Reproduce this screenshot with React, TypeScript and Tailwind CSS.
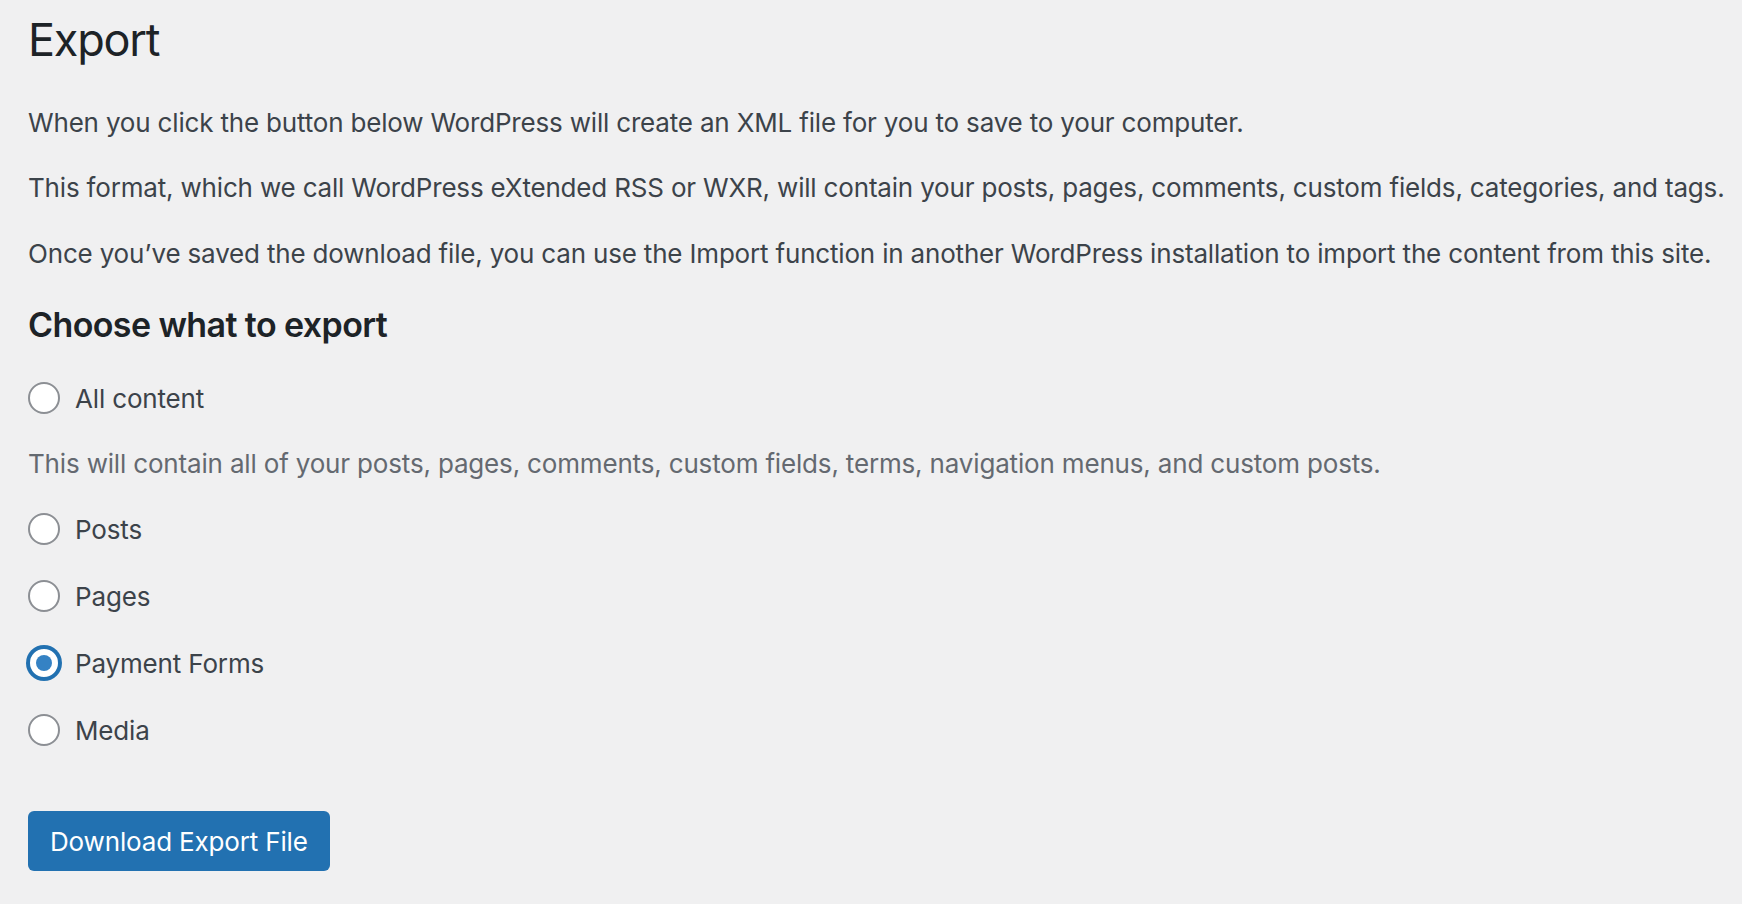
import React, { useState } from 'react';

const options = [
    { id: 'posts', label: 'Posts' },
    { id: 'pages', label: 'Pages' },
    { id: 'payment', label: 'Payment Forms' },
    { id: 'media', label: 'Media' },
];

// WordPress-style radio control
const Radio = ({ checked }: { checked: boolean }) => (
    <span
        className={`flex h-[32px] w-[32px] flex-shrink-0 items-center justify-center rounded-full bg-white ${
            checked ? 'border-[2px] border-[#2271b1] shadow-[0_0_0_2px_#2271b1]' : 'border-[2px] border-[#8c8f94]'
        }`}
    >
        {checked && <span className="h-[16px] w-[16px] rounded-full bg-[#3582c4]" />}
    </span>
);

const RadioRow = ({ label, checked, onSelect }: { label: string; checked: boolean; onSelect: () => void }) => (
    <label className="flex h-[40px] cursor-pointer items-center gap-[15px]" onClick={onSelect}>
        <Radio checked={checked} />
        <span className="text-[26px] tracking-[-0.16px] text-[#3c434a]">{label}</span>
    </label>
);

export default function App() {
    const [selected, setSelected] = useState('payment');

    return (
        <div className="min-h-screen bg-[#f0f0f1] pl-[28px] pt-[10px] font-['Inter',sans-serif] text-[#3c434a]">
            <h1 className="text-[45px] leading-[60px] font-normal tracking-[-1.2px] text-[#1d2327]">Export</h1>

            <div className="text-[26px] leading-[39px] tracking-[-0.18px]">
                <p className="mt-[33px]">
                    When you click the button below WordPress will create an XML file for you to save to your computer.
                </p>
                <p className="mt-[26px] whitespace-nowrap">
                    This format, which we call WordPress eXtended RSS or WXR, will contain your posts, pages, comments, custom fields, categories, and tags.
                </p>
                <p className="mt-[27px] whitespace-nowrap">
                    Once you’ve saved the download file, you can use the Import function in another WordPress installation to import the content from this site.
                </p>
            </div>

            <h2 className="mt-[30px] text-[34px] leading-[44px] font-semibold tracking-[-0.6px] text-[#1d2327]">Choose what to export</h2>

            <div className="mt-[31px]">
                <RadioRow label="All content" checked={selected === 'all'} onSelect={() => setSelected('all')} />
            </div>
            <p className="mt-[26px] text-[26px] leading-[39px] tracking-[-0.17px] text-[#646970]">
                This will contain all of your posts, pages, comments, custom fields, terms, navigation menus, and custom posts.
            </p>

            <div className="mt-[26px] flex flex-col gap-[27px]">
                {options.map(o => (
                    <RadioRow key={o.id} label={o.label} checked={selected === o.id} onSelect={() => setSelected(o.id)} />
                ))}
            </div>

            <button className="mt-[61px] h-[60px] rounded-[6px] bg-[#2271b1] px-[22px] text-[26px] tracking-[-0.16px] text-white">
                Download Export File
            </button>
        </div>
    );
}
